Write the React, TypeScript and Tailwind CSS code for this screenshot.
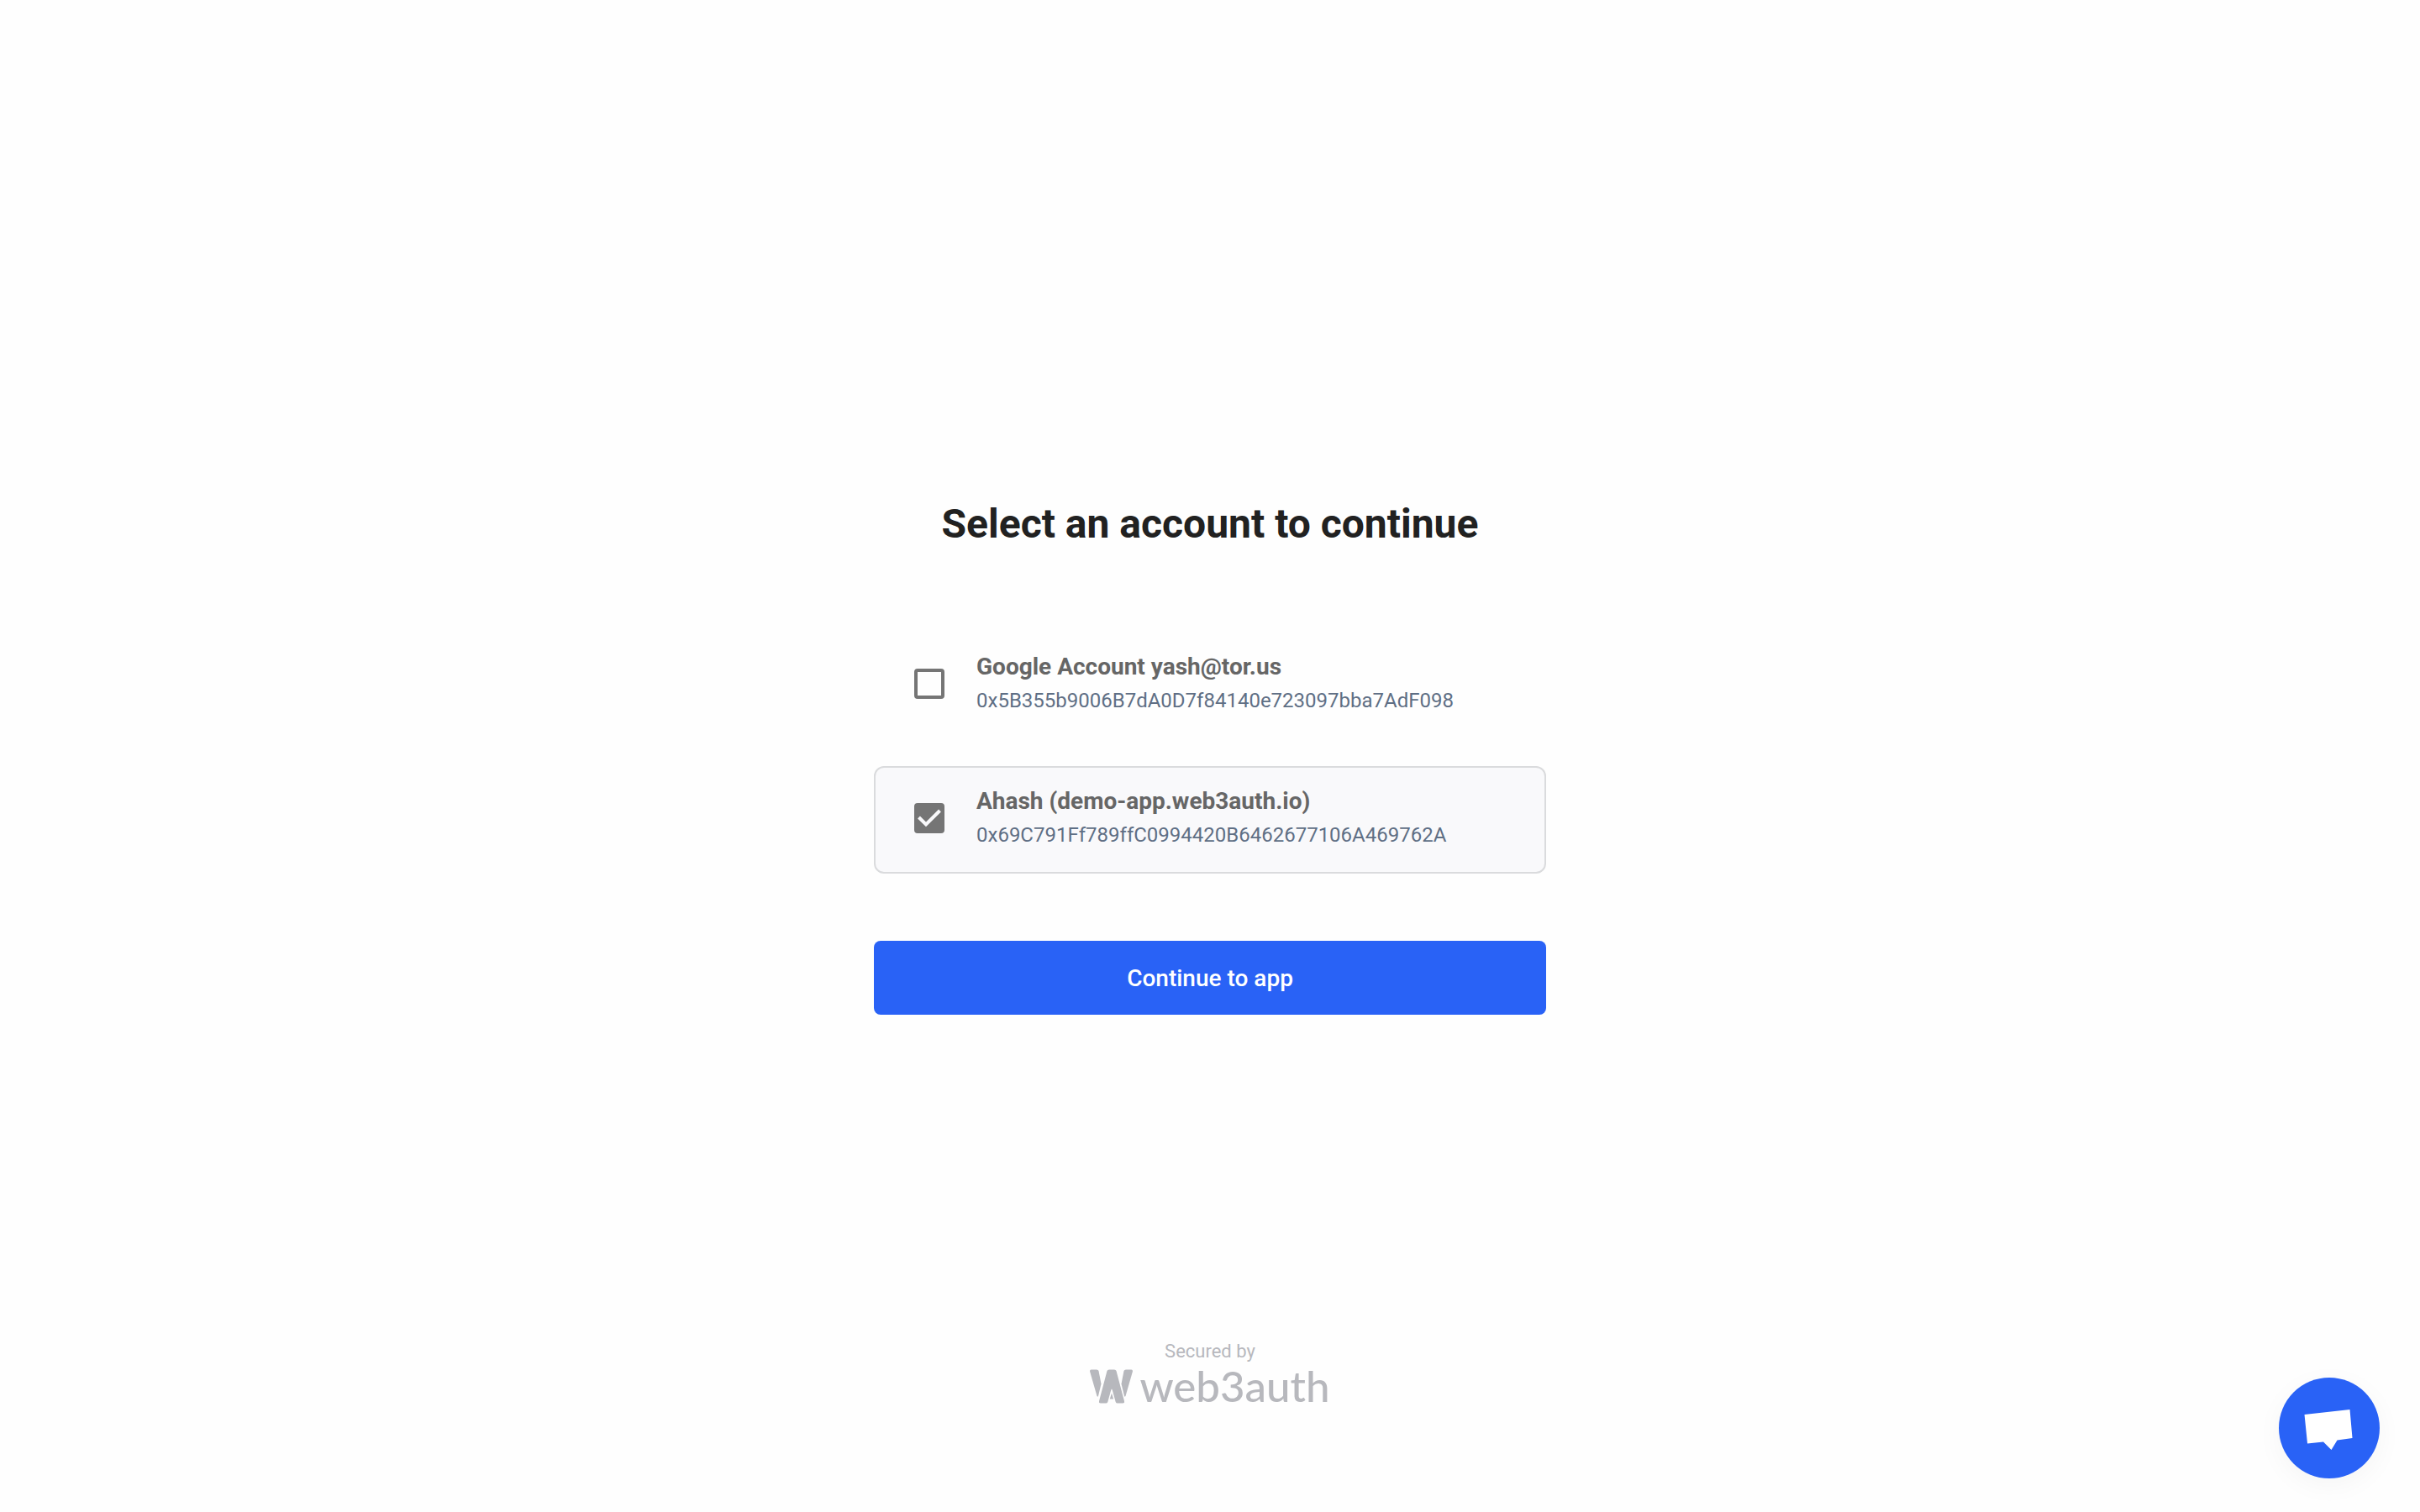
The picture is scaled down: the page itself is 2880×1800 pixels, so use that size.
import { useState } from "react";

const accounts = [
  { id: "google", name: "Google Account yash@tor.us", address: "0x5B355b9006B7dA0D7f84140e723097bba7AdF098" },
  { id: "demo", name: "Ahash (demo-app.web3auth.io)", address: "0x69C791Ff789ffC0994420B6462677106A469762A" },
];

function AccountOption({
  account,
  checked,
  onSelect,
}: {
  account: (typeof accounts)[number];
  checked: boolean;
  onSelect: () => void;
}) {
  return (
    <label
      className={
        checked
          ? "flex cursor-pointer items-start gap-[38px] rounded-xl border-2 border-[#dadbdd] bg-[#f9f9fb] px-[46px] pt-4 pb-[26px]"
          : "flex cursor-pointer items-start gap-[38px] rounded-xl border-2 border-transparent px-[46px] pt-4 pb-[26px]"
      }
    >
      <span className="mt-[26px] grid size-9 shrink-0">
        <input
          type="checkbox"
          checked={checked}
          onChange={onSelect}
          className="col-start-1 row-start-1 size-9 appearance-none rounded border-4 border-[#757575] checked:bg-[#757575]"
        />
        {checked && (
          <svg viewBox="0 0 36 36" className="pointer-events-none col-start-1 row-start-1 size-9" aria-hidden="true">
            <path d="M5.5 17 L14 25.5 L30.5 9" fill="none" stroke="#f9f9fb" strokeWidth="4" />
          </svg>
        )}
      </span>
      <span className="flex flex-col">
        <span className="pt-0.5 text-[28px] leading-11 font-bold text-[#666666]">{account.name}</span>
        <span className="text-2xl leading-9 text-[#5f6f85]">{account.address}</span>
      </span>
    </label>
  );
}

function Web3AuthMark() {
  return (
    <svg viewBox="0 0 51 41" className="h-[41px] w-[51px]" fill="#b7b8bd" aria-hidden="true">
      <path d="M1.5 0.5H8Q10 0.500 10.500 2L13.500 17.500L10 32Q9.300 33.500 8.500 32L0 2.500Q0 0.500 1.500 0.500Z" />
      <path d="M49.500 0.500H43Q41 0.500 40.500 2L37.500 17.500L41 32Q41.700 33.500 42.500 32L51 2.500Q51 0.500 49.500 0.500Z" />
      <path d="M23 0.500H29Q31 0.500 31.500 2L41 38Q41.500 40.500 39 40.500H33Q31.200 40.500 30.700 39L26.800 25Q26 22 25.200 25L21.300 39Q20.800 40.500 19 40.500H13Q10.500 40.500 11 38L20.500 2Q21 0.500 23 0.500Z" />
      <path d="M26 28.500L28.200 35.500H23.800Z" />
    </svg>
  );
}

export default function App() {
  const [selected, setSelected] = useState("demo");
  return (
    <div className="grid min-h-screen grid-rows-[1fr_auto_1fr] justify-items-center bg-[#fefefe] font-['Roboto',sans-serif]">
      <main className="row-start-2 flex w-full max-w-[800px] flex-col pt-1">
        <h1 className="text-center text-5xl leading-14 font-bold text-[#212121]">Select an account to continue</h1>
        <div className="mt-25 flex flex-col gap-8">
          {accounts.map((a) => (
            <AccountOption key={a.id} account={a} checked={selected === a.id} onSelect={() => setSelected(a.id)} />
          ))}
        </div>
        <button type="button" className="mt-20 h-22 rounded-lg bg-[#2962f6] pt-0.5 text-[28px] font-medium text-white">
          Continue to app
        </button>
      </main>
      <footer className="row-start-3 flex flex-col items-center self-end pb-[124px] text-[#b7b8bd]">
        <span className="text-[22px] leading-[30px]">Secured by</span>
        <span className="flex items-center gap-2">
          <Web3AuthMark />
          <span className="font-['Lato',sans-serif] text-[51px] leading-[52px] font-medium">web3auth</span>
        </span>
      </footer>
      <button
        type="button"
        aria-label="Open chat"
        className="fixed right-12 bottom-10 grid size-30 place-items-center rounded-full bg-[#2962f6] shadow-[0_8px_32px_rgba(0,0,0,0.04)]"
      >
        <svg viewBox="0 0 120 120" className="size-30" fill="#ffffff" aria-hidden="true">
          <path d="M30.500 44 L84.500 38 L87.500 72 L69.500 74.500 L62.500 86 L53 76.500 L34 78.500 Z" />
        </svg>
      </button>
    </div>
  );
}
